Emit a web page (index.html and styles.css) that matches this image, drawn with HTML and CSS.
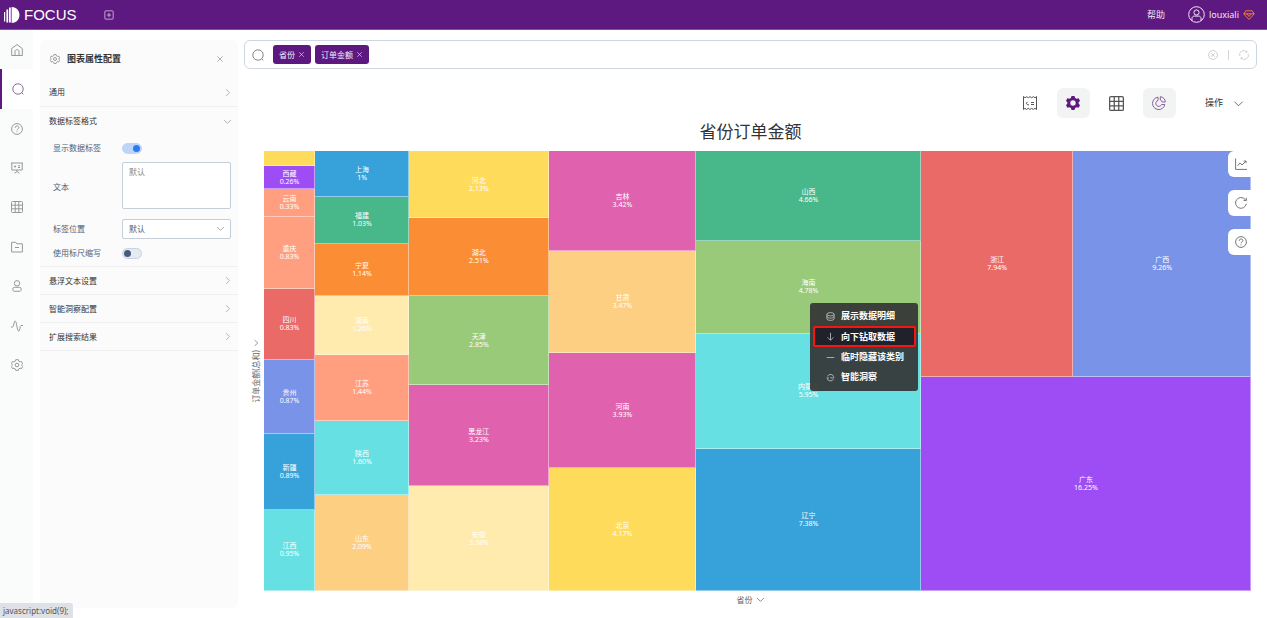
FILE: index.html
```html
<!DOCTYPE html>
<html lang="zh-CN">
<head>
<meta charset="utf-8">
<title>FOCUS</title>
<link rel="stylesheet" href="styles.css">
</head>
<body>
<svg class="defs" aria-hidden="true">
  <symbol id="right" viewBox="0 0 12 12"><path d="M4 1.5 8.500 6 4 10.500"/></symbol>
  <symbol id="down" viewBox="0 0 12 12"><path d="M1.500 4 6 8.500 10.500 4"/></symbol>
  <symbol id="close" viewBox="0 0 12 12"><path d="M2 2l8 8M10 2l-8 8"/></symbol>
  <symbol id="search" viewBox="0 0 12 12"><circle cx="6" cy="6" r="5.200"/><path d="M9.600 9.600 11.300 11.300"/></symbol>
  <symbol id="help" viewBox="0 0 12 12"><circle cx="6" cy="6" r="5.400"/><path d="M4.200 4.800c0-2.500 3.700-2.300 3.700-.2C7.900 6 6 5.900 6 7.300M6 8.400v.9"/></symbol>
  <symbol id="gear" viewBox="0 0 12 12"><path d="M4.700.7h2.600l.5 1.500 1.300.7 1.500-.3 1.100 2-1 1.200v.5l1 1.200-1.100 2-1.500-.3-1.300.7-.5 1.400H4.700l-.5-1.400-1.300-.7-1.500.3-1.100-2 1-1.200v-.5l-1-1.200 1.100-2 1.500.3 1.300-.7z"/><circle cx="6" cy="6" r="1.800"/></symbol>
  <symbol id="grid" viewBox="0 0 12 12"><rect x=".5" y=".5" width="11" height="11" rx="1"/><path d="M4.200.5v11M7.800.5v11M.5 4.200h11M.5 7.800h11"/></symbol>
</svg>

<header class="topbar">
  <a class="brand" href="#">
    <svg class="brand-mark" viewBox="0 0 16 16"><path d="M0 5h1.200v9.500H0zM2.400 2.500h1.800v13H2.400zM5 .5h1.800v15H5zM7.600 0c10.500 0 10.500 16 0 16z"/></svg>
    <span>FOCUS</span>
  </a>
  <button class="bare add" aria-label="新建"><svg class="icon s10" viewBox="0 0 12 12"><rect x="1" y="1" width="10" height="10" rx="1"/><path d="M6 3.500v5M3.500 6h5"/></svg></button>
  <a class="help-link" href="#">帮助</a>
  <button class="bare user">
    <svg class="icon s17" viewBox="0 0 17 17"><circle cx="8.500" cy="8.500" r="7.800"/><circle cx="8.500" cy="6.500" r="2.600"/><path d="M4 14.500v-2c0-1.500 1-2.400 2.500-2.400h4c1.500 0 2.500.9 2.500 2.400v2"/></svg>
    <span>louxiali</span>
    <svg class="icon s12 gem" viewBox="0 0 12 12"><path d="M2.800 1.800h6.400L11.200 5 6 10.500.8 5zM.8 4.800h10.400M4 5l2 2.500L8 5"/></svg>
  </button>
</header>

<div class="shell">
  <nav class="rail">
    <a href="#" aria-label="首页"><svg class="icon s12" viewBox="0 0 12 12"><path d="M.7 4.500 6 .6l5.300 3.900v7H.7zM4 11.500V7.300c0-2.100 4-2.100 4 0v4.200"/></svg></a>
    <a href="#" class="active" aria-label="搜索"><svg class="icon s12"><use href="#search"/></svg></a>
    <a href="#" aria-label="问答"><svg class="icon s12"><use href="#help"/></svg></a>
    <a href="#" aria-label="看板"><svg class="icon s12" viewBox="0 0 12 12"><path d="M0 1h12M.8 1v7h10.400V1M6 8v1.500M3.500 11.300 6 9.500l2.500 1.800M3 4.500h2M7 3.800h2M7 5.500h2M4 3.500v2"/></svg></a>
    <a href="#" aria-label="数据表"><svg class="icon s12"><use href="#grid"/></svg></a>
    <a href="#" aria-label="资源"><svg class="icon s12" viewBox="0 0 12 12"><path d="M.6 1.300h4.200l1 1.500h5.600v8.200H.6zM4 6.500h4"/></svg></a>
    <a href="#" aria-label="用户"><svg class="icon s12" viewBox="0 0 12 12"><circle cx="6" cy="3.300" r="2.700"/><rect x="1.700" y="7.300" width="8.600" height="4" rx="2"/></svg></a>
    <a href="#" aria-label="监控"><svg class="icon s12" viewBox="0 0 12 12"><path d="M0 7h1.500C3 7 2.700 1 4.200 1S6 11.300 7.700 11.300 8.500 5.500 10 5.500h2"/></svg></a>
    <a href="#" aria-label="设置"><svg class="icon s12"><use href="#gear"/></svg></a>
  </nav>

  <aside class="panel">
    <div class="panel-head">
      <svg class="icon s10"><use href="#gear"/></svg>
      <h2>图表属性配置</h2>
      <button class="bare" aria-label="关闭"><svg class="icon s8"><use href="#close"/></svg></button>
    </div>
    <button class="section">通用<svg class="icon s9"><use href="#right"/></svg></button>
    <div class="group">
      <button class="section">数据标签格式<svg class="icon s9"><use href="#down"/></svg></button>
      <div class="form">
        <label for="show">显示数据标签</label>
        <input class="switch" id="show" type="checkbox" checked>
        <label for="text">文本</label>
        <textarea id="text" placeholder="默认"></textarea>
        <label for="pos">标签位置</label>
        <div class="select"><select id="pos"><option>默认</option></select><svg class="icon s9"><use href="#down"/></svg></div>
        <label for="abbr">使用标尺缩写</label>
        <input class="switch" id="abbr" type="checkbox">
      </div>
    </div>
    <button class="section">悬浮文本设置<svg class="icon s9"><use href="#right"/></svg></button>
    <button class="section">智能洞察配置<svg class="icon s9"><use href="#right"/></svg></button>
    <button class="section">扩展搜索结果<svg class="icon s9"><use href="#right"/></svg></button>
  </aside>

  <main class="main">
    <div class="search">
      <svg class="icon s12"><use href="#search"/></svg>
      <button class="chip">省份<svg class="icon s7"><use href="#close"/></svg></button>
      <button class="chip">订单金额<svg class="icon s7"><use href="#close"/></svg></button>
      <input type="text" aria-label="搜索">
      <button class="bare faint" aria-label="清空"><svg class="icon s10" viewBox="0 0 12 12"><circle cx="6" cy="6" r="5.300"/><path d="M3.800 3.800l4.400 4.400M8.200 3.800 3.800 8.200"/></svg></button>
      <span class="rule"></span>
      <button class="bare faint" aria-label="刷新"><svg class="icon s10" viewBox="0 0 12 12"><path d="M1 7.500A5 5 0 0 1 9.500 2.500M11 4.500A5 5 0 0 1 2.500 9.500M9.500.8v2H7.800M2.500 11.200v-2h1.700"/></svg></button>
    </div>

    <div class="toolbar">
      <button class="tool" aria-label="公式"><svg class="icon s14" viewBox="0 0 14 14"><path d="M.5 13.500V.5M13.500.5v13M4.500 5.800 3.300 7.300l1.200 1.500H6M8 6.500h3M8 8.500h3"/><path d="M.5.5 2 1.800 3.700.6l1.600 1.200L7 .6l1.700 1.200L10.300.6 12 1.800 13.500.5M.5 13.500 2 12.300l1.700 1.200 1.600-1.200L7 13.500l1.700-1.200 1.600 1.200 1.700-1.200 1.500 1.200"/></svg></button>
      <button class="tool on" aria-label="配置"><svg class="solid s14" viewBox="0 0 14 14"><path fill-rule="evenodd" d="M5.500 0h3l.6 2 1.500.8 2-.5L14 4.800l-1.400 1.600v1.200L14 9.200l-1.400 2.500-2-.5-1.500.8-.6 2h-3l-.6-2-1.500-.8-2 .5L0 9.200l1.400-1.600V6.400L0 4.800l1.400-2.500 2 .5L4.900 2zM7 4.300a2.700 2.700 0 1 0 0 5.400 2.700 2.700 0 0 0 0-5.400z"/></svg></button>
      <button class="tool" aria-label="表格"><svg class="icon s15"><use href="#grid"/></svg></button>
      <button class="tool on soft" aria-label="图表"><svg class="icon s14" viewBox="0 0 14 14"><path d="M6 1.200A6.200 6.200 0 1 0 12.800 8.500H9.600A3 3 0 1 1 6 4.500zM8.300.7a5.400 5.400 0 0 1 5 5.300h-3.200A2.600 2.600 0 0 0 8.300 4z"/></svg></button>
      <button class="bare ops">操作<svg class="icon s11"><use href="#down"/></svg></button>
    </div>

    <h1>省份订单金额</h1>

    <div class="chart">
      <div class="y-axis"><svg class="icon s8"><use href="#right"/></svg><span>订单金额(总和)</span></div>
      <div class="plot">
        <div class="map">
          <div class="col" style="flex-grow:102">
            <div class="cell yellow" style="flex-grow:30"></div>
            <div class="cell purple" style="flex-grow:46">西藏<br>0.26%</div>
            <div class="cell salmon" style="flex-grow:56">云南<br>0.33%</div>
            <div class="cell salmon" style="flex-grow:143">重庆<br>0.83%</div>
            <div class="cell red" style="flex-grow:142">四川<br>0.83%</div>
            <div class="cell blue" style="flex-grow:149">贵州<br>0.87%</div>
            <div class="cell azure" style="flex-grow:151">新疆<br>0.89%</div>
            <div class="cell cyan" style="flex-grow:163">江西<br>0.95%</div>
          </div>
          <div class="col" style="flex-grow:188">
            <div class="cell azure" style="flex-grow:91">上海<br>1%</div>
            <div class="cell green" style="flex-grow:95">福建<br>1.03%</div>
            <div class="cell orange" style="flex-grow:104">宁夏<br>1.14%</div>
            <div class="cell cream" style="flex-grow:117">湖南<br>1.26%</div>
            <div class="cell salmon" style="flex-grow:132">江苏<br>1.44%</div>
            <div class="cell cyan" style="flex-grow:148">陕西<br>1.60%</div>
            <div class="cell sand" style="flex-grow:193">山东<br>2.09%</div>
          </div>
          <div class="col" style="flex-grow:279">
            <div class="cell yellow" style="flex-grow:134">河北<br>2.13%</div>
            <div class="cell orange" style="flex-grow:156">湖北<br>2.51%</div>
            <div class="cell lime" style="flex-grow:178">天津<br>2.85%</div>
            <div class="cell pink" style="flex-grow:202">黑龙江<br>3.23%</div>
            <div class="cell cream" style="flex-grow:210">安徽<br>3.38%</div>
          </div>
          <div class="col" style="flex-grow:295">
            <div class="cell pink" style="flex-grow:200">吉林<br>3.42%</div>
            <div class="cell sand" style="flex-grow:204">甘肃<br>3.47%</div>
            <div class="cell pink" style="flex-grow:230">河南<br>3.93%</div>
            <div class="cell yellow" style="flex-grow:246">北京<br>4.17%</div>
          </div>
          <div class="col" style="flex-grow:449">
            <div class="cell green" style="flex-grow:180">山西<br>4.66%</div>
            <div class="cell lime" style="flex-grow:185">海南<br>4.78%</div>
            <div class="cell cyan" style="flex-grow:230">内蒙古<br>5.95%</div>
            <div class="cell azure" style="flex-grow:285">辽宁<br>7.38%</div>
          </div>
          <div class="col" style="flex-grow:660">
            <div class="row" style="flex-grow:452">
              <div class="cell red" style="flex-grow:305">浙江<br>7.94%</div>
              <div class="cell blue" style="flex-grow:355">广西<br>9.26%</div>
            </div>
            <div class="cell purple" style="flex-grow:428">广东<br>16.25%</div>
          </div>
        </div>

        <div class="side-tabs">
          <button aria-label="趋势"><svg class="icon s12" viewBox="0 0 12 12"><path d="M.6.5v10.900H12M2.500 7.800 5 5l2 2 4-4M8.700 3H11v2.200"/></svg></button>
          <button aria-label="刷新"><svg class="icon s12" viewBox="0 0 12 12"><path d="M11.300 6.800A5.400 5.400 0 1 1 10 2.300l1 1M11.300.8v2.700H8.600"/></svg></button>
          <button aria-label="帮助"><svg class="icon s12"><use href="#help"/></svg></button>
        </div>

        <div class="menu">
          <button><svg class="icon s9" viewBox="0 0 12 12"><ellipse cx="6" cy="3" rx="4.800" ry="2.200"/><path d="M1.200 3v6c0 2.900 9.600 2.900 9.600 0V3M1.200 6c0 2.900 9.600 2.900 9.600 0"/></svg>展示数据明细</button>
          <button class="current"><svg class="icon s9" viewBox="0 0 12 12"><path d="M6 1v10M2 7l4 4 4-4"/></svg>向下钻取数据</button>
          <button><svg class="icon s9" viewBox="0 0 12 12"><path d="M1 6h10"/></svg>临时隐藏该类别</button>
          <button><svg class="icon s9" viewBox="0 0 12 12"><path d="M2 4.500a4.500 4.500 0 0 1 8.500 1M10 8a4.500 4.500 0 0 1-8.500-1M1 6.500h3M5.500 6.500H11"/></svg>智能洞察</button>
        </div>
      </div>
    </div>
    <div class="x-axis">省份<svg class="icon s9"><use href="#down"/></svg></div>
  </main>
</div>
<div class="status">javascript:void(9);</div>
</body>
</html>
```
FILE: styles.css
```css
* { box-sizing: border-box; }

body {
  margin: 0;
  height: 100vh;
  display: flex;
  flex-direction: column;
  background: #fff;
  color: #333;
  font-family: "Noto Sans", "Noto Sans CJK SC", sans-serif;
  font-size: 8px;
  line-height: 12px;
}

button, input, select, textarea {
  margin: 0;
  font: inherit;
  color: inherit;
}

button {
  display: flex;
  align-items: center;
  padding: 0;
  border: 0;
  background: none;
}

a { color: inherit; text-decoration: none; }
h1, h2 { margin: 0; }

.defs { position: absolute; width: 0; height: 0; }
.icon { fill: none; stroke: currentColor; stroke-width: 1; flex: none; display: block; }
.solid { fill: currentColor; flex: none; }
.s7 { width: 7px; height: 7px; }
.s8 { width: 8px; height: 8px; }
.s9 { width: 9px; height: 9px; }
.s10 { width: 10px; height: 10px; }
.s11 { width: 11px; height: 11px; }
.s12 { width: 12px; height: 12px; }
.s14 { width: 14px; height: 14px; }
.s15 { width: 15px; height: 15px; }
.s17 { width: 17px; height: 17px; }

/* Top bar */
.topbar {
  flex: none;
  height: 30px;
  display: flex;
  align-items: center;
  padding: 0 12px 0 4px;
  background: #5d197f;
  border-bottom: 1px solid #8650a0;
  color: #f1e8f5;
  font-size: 9px;
}
.brand {
  display: flex;
  align-items: center;
  gap: 4px;
  font: 15px/18px "Liberation Sans", Arial, sans-serif;
  color: #fff;
}
.brand-mark { width: 16px; height: 16px; fill: currentColor; }
.add { margin-left: 27px; color: #d5c0de; }
.help-link { margin-left: auto; }
.user { margin-left: 23px; gap: 4px; }
.gem { color: #f08030; }

.shell { flex: 1; min-height: 0; display: flex; }

/* Navigation rail */
.rail {
  width: 33px;
  flex: none;
  display: grid;
  grid-template-rows: repeat(9, 1fr);
  padding-bottom: 233px;
  background: #fafcfb;
  color: #979797;
}
.rail a { display: grid; place-items: center; }
.rail .active {
  background: #fff;
  border-left: 2px solid #5d197f;
  color: #8b6c9b;
}

/* Settings panel */
.panel {
  width: 198px;
  flex: none;
  margin: 10px 6px 10px 7px;
  background: #fbfbfb;
  border-radius: 6px;
}
.panel-head {
  height: 38px;
  display: flex;
  align-items: center;
  gap: 7px;
  padding: 0 14px 0 10px;
  color: #888;
}
.panel-head h2 { flex: 1; font-size: 9px; color: #333; }
.section {
  width: 100%;
  height: 28px;
  justify-content: space-between;
  padding: 0 6px 0 9px;
}
.section .icon { color: #999; }
.panel > .section { height: 29px; border-bottom: 1px solid #f0f0f0; }
.group ~ .section { height: 28px; }
.group { border-bottom: 1px solid #f0f0f0; padding-bottom: 7px; }
.form {
  display: grid;
  grid-template-columns: 69px 1fr;
  align-items: center;
  row-gap: 8px;
  padding: 7px 7px 0 13px;
  color: #4c5f78;
}
.form textarea {
  height: 47px;
  margin-bottom: 2px;
  resize: none;
  padding: 3px 6px;
  border: 1px solid #c4cfda;
  border-radius: 2px;
  background: #fff;
  outline: 0;
}
.form textarea::placeholder { color: #888; }
.select { position: relative; height: 20px; }
.select select {
  width: 100%;
  height: 20px;
  appearance: none;
  padding: 0 6px;
  border: 1px solid #c4cfda;
  border-radius: 2px;
  background: #fff;
}
.select .icon { position: absolute; right: 6px; top: 5px; color: #888; pointer-events: none; }
.switch {
  appearance: none;
  width: 20px;
  height: 11px;
  border-radius: 6px;
  border: 1px solid #c8d3df;
  background: #e6ebf1;
  display: flex;
  align-items: center;
  padding: 0 1px;
}
.switch::before {
  content: "";
  width: 7px;
  height: 7px;
  border-radius: 50%;
  background: #475c7c;
}
.switch:checked { background: #bdd5f6; border-color: #bdd5f6; justify-content: flex-end; }
.switch:checked::before { background: #2b7cf0; }

/* Main area */
.main {
  flex: 1;
  min-width: 0;
  display: flex;
  flex-direction: column;
  padding: 10px 10px 10px 0;
}
.search {
  height: 29px;
  flex: none;
  display: flex;
  align-items: center;
  gap: 4px;
  padding: 0 7px;
  border: 1px solid #cdd6e1;
  border-radius: 6px;
}
.search > .icon { color: #888; margin-right: 5px; }
.search input { flex: 1; min-width: 0; border: 0; outline: 0; background: none; }
.chip {
  height: 19px;
  gap: 3px;
  padding: 0 6px;
  border-radius: 3px;
  background: #5d197f;
  color: #f4edf7;
}
.faint { color: #c8c8c8; }
.rule { width: 1px; height: 10px; margin: 0 6px; background: #d5d5d5; }

.toolbar {
  flex: none;
  display: flex;
  justify-content: flex-end;
  gap: 10px;
  margin-top: 19px;
  padding-right: 13px;
  font-size: 9px;
}
.tool { width: 33px; height: 30px; justify-content: center; border-radius: 6px; color: #555; }
.tool.on { background: #f2f3f3; color: #5d197f; }
.tool.soft { color: #8a5fa3; }
.ops { gap: 10px; margin-left: 19px; }
.ops .icon { color: #666; }

h1 {
  flex: none;
  padding: 2px 0 7px;
  text-align: center;
  font-size: 17px;
  font-weight: 400;
  line-height: 24px;
}

.chart { flex: 1; min-height: 0; display: flex; padding-right: 6px; }
.y-axis {
  width: 20px;
  flex: none;
  display: flex;
  flex-direction: column;
  align-items: center;
  justify-content: center;
  gap: 3px;
  padding-left: 4px;
  color: #666;
}
.y-axis span {
  writing-mode: vertical-rl;
  text-orientation: sideways;
  transform: rotate(180deg);
}
.x-axis {
  height: 17px;
  flex: none;
  display: flex;
  align-items: center;
  justify-content: center;
  gap: 3px;
  color: #666;
}
.plot { flex: 1; min-width: 0; position: relative; }

/* Treemap */
.map { height: 100%; display: flex; }
.col { flex: 1 1 0; min-width: 0; display: flex; flex-direction: column; }
.row { flex: 1 1 0; min-height: 0; display: flex; }
.cell {
  flex: 1 1 0;
  min-width: 0;
  min-height: 0;
  display: flex;
  align-items: center;
  justify-content: center;
  text-align: center;
  font-size: 7px;
  line-height: 8px;
  color: #fff;
  box-shadow: inset -1px -1px rgba(255, 255, 255, .45);
}
.yellow { background: #ffdb5c; }
.purple { background: #9d4df3; }
.salmon { background: #ff9f7f; }
.red { background: #ea6a68; }
.blue { background: #7893e8; }
.azure { background: #37a2da; }
.cyan { background: #67e0e3; }
.green { background: #48b78a; }
.orange { background: #fb8e34; }
.cream { background: #ffebad; }
.sand { background: #fdcf83; }
.lime { background: #98ca7a; }
.pink { background: #e062ae; }

.side-tabs {
  position: absolute;
  top: 0;
  right: -1px;
  display: flex;
  flex-direction: column;
  gap: 13px;
}
.side-tabs button {
  width: 24px;
  height: 26px;
  padding-left: 7px;
  border-radius: 6px 0 0 6px;
  background: #fff;
  color: #777;
}

.menu {
  position: absolute;
  left: 546px;
  top: 152px;
  width: 108px;
  padding: 3px 2px 4px 3px;
  border-radius: 3px;
  background: rgba(52, 52, 52, .92);
  color: #fff;
  font-size: 9px;
  font-weight: 700;
}
.menu button { width: 100%; height: 20px; gap: 6px; padding-left: 11px; border: 2px solid transparent; }
.menu .icon { color: #ccc; }
.menu .current { height: 21px; border-color: #f3170f; border-radius: 2px; background: #21212c; }

.status {
  position: fixed;
  left: 0;
  bottom: 0;
  padding: 2px 4px 1px 3px;
  border-radius: 0 3px 0 0;
  background: #dee1e6;
  color: #555;
}
```
